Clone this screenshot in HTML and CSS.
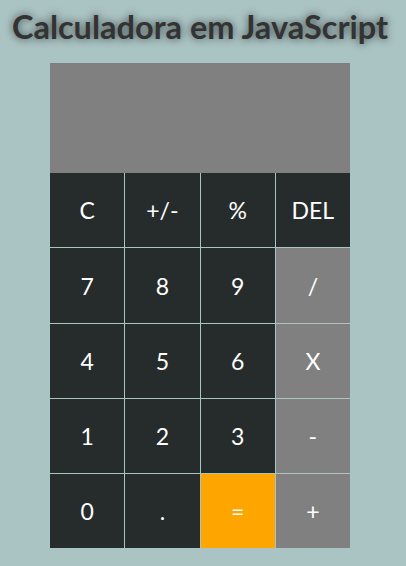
FILE: index.html
```html
<!DOCTYPE html>
<html lang="pt-BR">
<head>
<meta charset="utf-8">
<title>Calculadora em JavaScript</title>
<link rel="stylesheet" href="styles.css">
</head>
<body>
<h1 class="title">Calculadora em JavaScript</h1>
<div class="calculator">
  <div class="display"></div>
  <div class="keys">
    <button class="key">C</button>
    <button class="key">+/-</button>
    <button class="key">%</button>
    <button class="key">DEL</button>
    <button class="key">7</button>
    <button class="key">8</button>
    <button class="key">9</button>
    <button class="key op">/</button>
    <button class="key">4</button>
    <button class="key">5</button>
    <button class="key">6</button>
    <button class="key op">X</button>
    <button class="key">1</button>
    <button class="key">2</button>
    <button class="key">3</button>
    <button class="key op">-</button>
    <button class="key">0</button>
    <button class="key">.</button>
    <button class="key eq">=</button>
    <button class="key op">+</button>
  </div>
</div>
</body>
</html>
```
FILE: styles.css
```css
html, body {
  margin: 0;
  padding: 0;
}
body {
  background: #aac3c3;
  font-family: "Lato", "Open Sans", sans-serif;
  padding-right: 6px;
}
.title {
  margin: 0;
  padding-top: 7px;
  height: 56px;
  box-sizing: border-box;
  text-align: center;
  font-size: 32.5px;
  font-weight: 700;
  color: #333333;
  text-shadow: 0 0 9px rgba(0, 0, 0, 0.65);
  line-height: 40px;
  white-space: nowrap;
}
.calculator {
  width: 300px;
  margin: 7px auto 0;
}
.display {
  height: 110px;
  background: #808080;
}
.keys {
  display: grid;
  grid-template-columns: repeat(4, 1fr);
  grid-template-rows: 74px 75px 74px 74px 74px;
  gap: 1px;
  background: #aac3c3;
}
.key {
  border: 0;
  margin: 0;
  padding: 0;
  background: #262c2c;
  color: #ffffff;
  font-family: "Lato", "Open Sans", sans-serif;
  font-size: 23px;
}
.key.op {
  background: #808080;
}
.key.eq {
  background: #ffa500;
}
```
